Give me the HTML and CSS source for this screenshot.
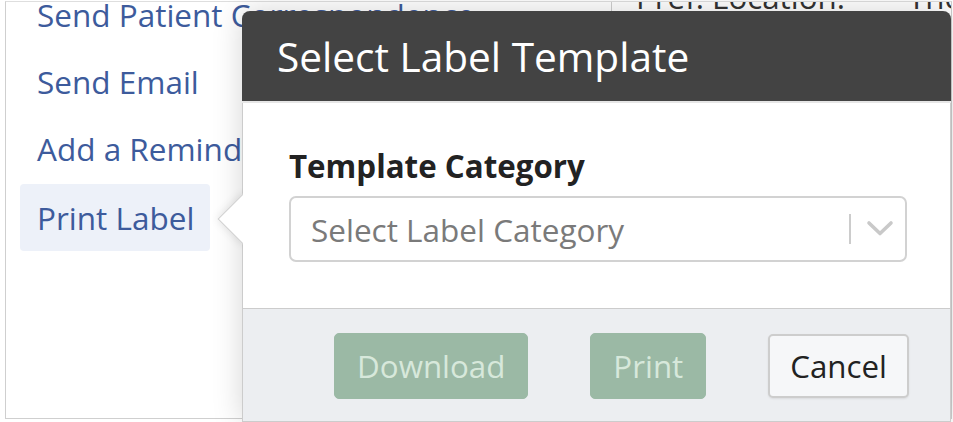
FILE: index.html
```html
<!DOCTYPE html>
<html lang="en">
<head>
<meta charset="utf-8">
<title>Select Label Template</title>
<link rel="stylesheet" href="styles.css">
</head>
<body>
<div class="page">
  <div class="panel">
    <ul class="menu">
      <li class="menu-item">Send Patient Correspondence</li>
      <li class="menu-item">Send Email</li>
      <li class="menu-item">Add a Reminder</li>
      <li class="menu-item active">Print Label</li>
    </ul>
    <div class="details">
      <div class="detail-row">
        <span class="detail-label">Pref. Location:</span>
        <span class="detail-value">The</span>
      </div>
    </div>
  </div>

  <div class="popover">
    <div class="popover-arrow"></div>
    <div class="popover-header">Select Label Template</div>
    <div class="popover-body">
      <div class="field-label">Template Category</div>
      <div class="select">
        <span class="select-placeholder">Select Label Category</span>
        <span class="select-sep"></span>
        <svg class="select-chevron" width="28" height="18" viewBox="0 0 28 18">
          <path d="M3 3 L14 13.5 L25 3" fill="none" stroke="#c9c9c9" stroke-width="3.6" stroke-linecap="round" stroke-linejoin="round"/>
        </svg>
      </div>
    </div>
    <div class="popover-footer">
      <button class="btn btn-primary" disabled>Download</button>
      <button class="btn btn-primary" disabled>Print</button>
      <button class="btn btn-default">Cancel</button>
    </div>
  </div>
</div>
</body>
</html>
```

FILE: styles.css
```css
html, body {
  margin: 0;
  padding: 0;
  background: #ffffff;
}

body {
  font-family: "Open Sans", "Noto Sans", "Liberation Sans", sans-serif;
  width: 953px;
  height: 422px;
  overflow: hidden;
}

.page {
  position: relative;
  width: 953px;
  height: 422px;
}

.panel {
  margin-left: 5px;
  margin-top: 1px;
  width: 947px;
  height: 418px;
  box-sizing: border-box;
  border-left: 1px solid #cfcfcf;
  border-right: 1px solid #cfcfcf;
  border-top: 1px solid #dedede;
  border-bottom: 1px solid #cfcfcf;
  display: flex;
  overflow: hidden;
}

.menu {
  list-style: none;
  margin: -21px 0 0 0;
  padding: 0 0 0 14px;
  width: 591px;
  flex: none;
  display: flex;
  flex-direction: column;
  align-items: flex-start;
}

.menu-item {
  height: 67px;
  line-height: 67px;
  padding: 0 16px 0 17px;
  font-size: 31.5px;
  color: #3d5b9c;
  white-space: nowrap;
  border-radius: 4px;
}

.menu-item.active {
  background: #edf1f9;
  margin-top: 2px;
}

.details {
  flex: 1;
  border-left: 1px solid #cfcfcf;
  position: relative;
  z-index: 1;
  background: #ffffff;
}

.detail-row {
  display: flex;
  margin-top: -25px;
  padding-left: 24px;
  font-size: 31.3px;
  line-height: 40px;
  color: #333333;
  white-space: nowrap;
}

.detail-label {
  width: 272px;
}

/* Popover dialog */
.popover {
  position: absolute;
  left: 242px;
  top: 10px;
  width: 709px;
  height: 411px;
  box-sizing: border-box;
  border: 1px solid #cccccc;
  border-top: none;
  border-radius: 8px 8px 0 0;
  background: #ffffff;
  box-shadow: 0 0 30px rgba(0, 0, 0, 0.17);
  z-index: 5;
  display: flex;
  flex-direction: column;
}

.popover-arrow {
  position: absolute;
  left: -18px;
  top: 190px;
  width: 34px;
  height: 34px;
  background: #ffffff;
  border: 1px solid #cfcfcf;
  transform: rotate(45deg);
  box-shadow: 0 0 10px rgba(0, 0, 0, 0.12);
  z-index: -1;
}

.popover-header {
  height: 92px;
  margin: 0 -1px;
  box-sizing: border-box;
  padding: 2px 0 0 35px;
  background: #434343;
  color: #ffffff;
  font-size: 40.6px;
  line-height: 88px;
  border-radius: 8px 8px 0 0;
  border-bottom: 2px solid #e6e6e6;
}

.popover-body {
  background: #ffffff;
  padding: 42px 43px 46px 46px;
  position: relative;
}

.field-label {
  font-weight: 700;
  font-size: 31.3px;
  line-height: 42px;
  color: #222222;
  margin-bottom: 9px;
}

.select {
  height: 66px;
  box-sizing: border-box;
  border: 2px solid #d2d2d2;
  border-radius: 7px;
  display: flex;
  align-items: center;
  padding: 0 11px 0 20px;
}

.select-placeholder {
  flex: 1;
  font-size: 31.5px;
  color: #7a7a7a;
}

.select-sep {
  width: 2px;
  height: 30px;
  background: #cccccc;
  margin-right: 15px;
}

.select-chevron {
  display: block;
}

.popover-footer {
  flex: 1;
  background: #eceef1;
  border-top: 1px solid #cccccc;
  display: flex;
  justify-content: flex-end;
  align-items: flex-start;
  gap: 62px;
  padding: 24px 41px 0 0;
}

.btn {
  font-family: "Open Sans", "Noto Sans", "Liberation Sans", sans-serif;
  font-size: 31.3px;
  height: 66px;
  border-radius: 5px;
  padding: 0 22px;
  line-height: 64px;
  box-sizing: border-box;
  margin: 0;
}

.btn-primary {
  background: #9bb9a5;
  color: #d7e8db;
  border: 1px solid #9bb9a5;
}

.btn-default {
  background: #f6f7f9;
  color: #222222;
  border: 2px solid #cdcdcd;
  height: 64px;
  margin-top: 1px;
  line-height: 60px;
  padding: 0 20px;
  box-shadow: 0 1px 2px rgba(0, 0, 0, 0.08);
}
```
